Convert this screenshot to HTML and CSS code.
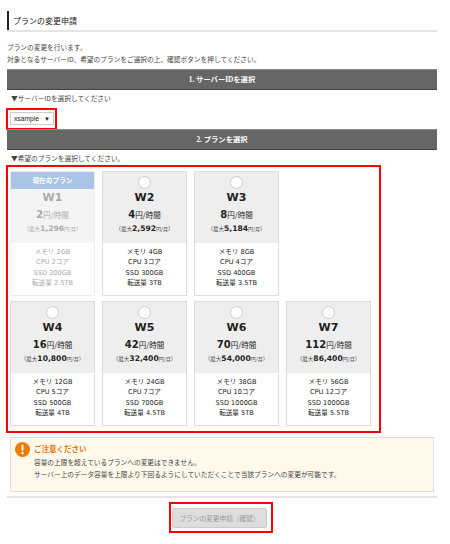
FILE: index.html
```html
<!DOCTYPE html>
<html lang="ja">
<head>
<meta charset="utf-8">
<title>プランの変更申請</title>
<link rel="stylesheet" href="styles.css">
</head>
<body>
<main class="page">
  <h1 class="title"><span>プランの変更申請</span></h1>
  <p class="intro">プランの変更を行います。<br>対象となるサーバーID、希望のプランをご選択の上、確認ボタンを押してください。</p>
  <h2 class="step">1. サーバーIDを選択</h2>
  <p class="hint">▼サーバーIDを選択してください</p>
  <div class="select-mark">
    <div class="select"><span>xsample</span><span class="arrow">▼</span></div>
  </div>
  <h2 class="step">2. プランを選択</h2>
  <p class="hint hint-plan">▼希望のプランを選択してください。</p>
  <section class="plans">
    <article class="card current">
      <div class="card-top">
        <div class="now">現在のプラン</div>
        <div class="name">W1</div>
        <div class="price"><b>2</b>円/時間</div>
        <div class="max">（最大<b>1,296</b><small>円/月</small>）</div>
      </div>
      <ul class="spec"><li>メモリ 2GB</li><li>CPU 2コア</li><li>SSD 200GB</li><li>転送量 2.5TB</li></ul>
    </article>
    <article class="card">
      <div class="card-top">
        <i class="radio"></i>
        <div class="name">W2</div>
        <div class="price"><b>4</b>円/時間</div>
        <div class="max">（最大<b>2,592</b><small>円/月</small>）</div>
      </div>
      <ul class="spec"><li>メモリ 4GB</li><li>CPU 3コア</li><li>SSD 300GB</li><li>転送量 3TB</li></ul>
    </article>
    <article class="card">
      <div class="card-top">
        <i class="radio"></i>
        <div class="name">W3</div>
        <div class="price"><b>8</b>円/時間</div>
        <div class="max">（最大<b>5,184</b><small>円/月</small>）</div>
      </div>
      <ul class="spec"><li>メモリ 8GB</li><li>CPU 4コア</li><li>SSD 400GB</li><li>転送量 3.5TB</li></ul>
    </article>
    <div class="filler"></div>
    <article class="card">
      <div class="card-top">
        <i class="radio"></i>
        <div class="name">W4</div>
        <div class="price"><b>16</b>円/時間</div>
        <div class="max">（最大<b>10,800</b><small>円/月</small>）</div>
      </div>
      <ul class="spec"><li>メモリ 12GB</li><li>CPU 5コア</li><li>SSD 500GB</li><li>転送量 4TB</li></ul>
    </article>
    <article class="card">
      <div class="card-top">
        <i class="radio"></i>
        <div class="name">W5</div>
        <div class="price"><b>42</b>円/時間</div>
        <div class="max">（最大<b>32,400</b><small>円/月</small>）</div>
      </div>
      <ul class="spec"><li>メモリ 24GB</li><li>CPU 7コア</li><li>SSD 700GB</li><li>転送量 4.5TB</li></ul>
    </article>
    <article class="card">
      <div class="card-top">
        <i class="radio"></i>
        <div class="name">W6</div>
        <div class="price"><b>70</b>円/時間</div>
        <div class="max">（最大<b>54,000</b><small>円/月</small>）</div>
      </div>
      <ul class="spec"><li>メモリ 38GB</li><li>CPU 10コア</li><li>SSD 1000GB</li><li>転送量 5TB</li></ul>
    </article>
    <article class="card">
      <div class="card-top">
        <i class="radio"></i>
        <div class="name">W7</div>
        <div class="price"><b>112</b>円/時間</div>
        <div class="max">（最大<b>86,400</b><small>円/月</small>）</div>
      </div>
      <ul class="spec"><li>メモリ 56GB</li><li>CPU 12コア</li><li>SSD 1000GB</li><li>転送量 5.5TB</li></ul>
    </article>
  </section>
  <aside class="notice">
    <svg class="notice-icon" viewBox="0 0 16 16" width="15" height="15" aria-hidden="true">
      <circle cx="8" cy="8" r="8" fill="#ee7a00"/>
      <path d="M6.8 2.8h2.4l-.4 6.6H7.2z" fill="#fff"/>
      <circle cx="8" cy="11.8" r="1.4" fill="#fff"/>
    </svg>
    <div class="notice-body">
      <p class="notice-title">ご注意ください</p>
      <p class="notice-text">容量の上限を超えているプランへの変更はできません。<br>サーバー上のデータ容量を上限より下回るようにしていただくことで当該プランへの変更が可能です。</p>
    </div>
  </aside>
  <div class="actions">
    <div class="button-mark"><div class="button">プランの変更申請（確認）</div></div>
  </div>
</main>
</body>
</html>
```

FILE: styles.css
```css
* { box-sizing: border-box; }
html, body { margin: 0; padding: 0; background: #fff; }
body {
  font-family: "Noto Sans CJK JP", sans-serif;
  color: #333;
  font-size: 6.7px;
  text-spacing-trim: space-all;
}
.page { width: 450px; height: 544px; padding: 11px 13px 0 7px; overflow: hidden; }
p, h1, h2, ul { margin: 0; padding: 0; }

.title {
  height: 21px;
  border-bottom: 2px solid #e4e4e4;
  font-size: 8px;
  font-weight: 400;
  color: #222;
}
.title span {
  display: flex;
  align-items: center;
  height: 19px;
  border-left: 2px solid #222;
  padding-left: 4px;
}
.intro { margin-top: 9px; line-height: 12px; height: 28px; color: #444; }

.step {
  height: 21px;
  background: #666;
  border-top: 1px solid #888;
  border-bottom: 1px solid #444;
  color: #fff;
  font: bold 7.3px/19px "Liberation Serif", "Noto Sans CJK JP", serif;
  text-align: center;
}
.hint { padding-left: 4px; margin-top: 4px; line-height: 9px; height: 13px; color: #444; }

.select-mark {
  margin: 1px 0 -1px -1px;
  width: 51px;
  height: 22px;
  border: 2px solid #f00;
  padding: 2px;
}
.select {
  display: flex;
  justify-content: space-between;
  align-items: center;
  width: 44px;
  height: 13px;
  border: 1px solid #ccc;
  padding: 0 3px;
  font: 6.7px "Liberation Sans", sans-serif;
  color: #222;
}
.arrow { font-size: 6px; }
.hint-plan { margin-top: 4px; height: 11px; }

.plans {
  margin-left: -1px;
  width: 375px;
  height: 268px;
  border: 2px solid #f00;
  padding: 4px 2px;
  display: grid;
  grid-template-columns: repeat(4, 85px);
  grid-auto-rows: 125px;
  column-gap: 7px;
  row-gap: 5px;
}
.card {
  border: 1px solid #ddd;
  text-align: center;
  color: #222;
  display: flex;
  flex-direction: column;
}
.card-top { height: 71px; background: #eee; flex: none; }
.radio {
  display: block;
  width: 13px;
  height: 13px;
  margin: 4px auto 0;
  border-radius: 50%;
  background: #fff;
  border: 1px solid #ccc;
}
.now {
  height: 17px;
  background: #a9c4e4;
  color: #fff;
  font-size: 6.7px;
  line-height: 16px;
  font-weight: bold;
}
.name { margin-top: 2px; font: bold 11px/14px "DejaVu Sans", sans-serif; color: #222; height: 14px; }
.price { margin-top: 3px; height: 14px; line-height: 14px; font-size: 7.5px; }
.price b { font: bold 10px "DejaVu Sans", sans-serif; }
.max { margin-top: 1px; line-height: 12px; font-size: 5.5px; color: #444; white-space: nowrap; }
.max b { font: bold 7.6px "DejaVu Sans", sans-serif; color: #222; }
.max small { font-size: 5px; }
.spec { list-style: none; padding-top: 4px; font: 6.6px/10.3px "DejaVu Sans", "Noto Sans CJK JP", sans-serif; }

.current { border-color: #eee; color: #aaa; }
.current .card-top { background: #f4f4f4; }
.current .name, .current .max, .current .max b { color: #aaa; }
.current .spec { color: #aaa; }

.notice {
  margin: 4px 3px 0;
  width: 424px;
  height: 55px;
  background: #fff9ec;
  border: 1px solid #ddd;
  padding: 4px;
  display: flex;
  gap: 4px;
}
.notice-icon { flex: none; }
.notice-title { color: #e57300; font-size: 7.5px; font-weight: bold; line-height: 10px; margin-top: 2px; }
.notice-text { margin-top: 3px; line-height: 11.5px; color: #444; }

.actions {
  margin-top: 4px;
  border-top: 2px solid #e4e4e4;
  padding-top: 4px;
  display: flex;
  justify-content: center;
  width: 430px;
}
.button-mark {
  width: 104px;
  height: 31px;
  border: 2px solid #f00;
  padding: 4px 2px 0 1px;
  margin-left: -2px;
}
.button {
  width: 95px;
  height: 20px;
  background: #ddd;
  border: 1px solid #ccc;
  border-radius: 2px;
  color: #999;
  line-height: 18px;
  text-align: center;
  white-space: nowrap;
}
```
